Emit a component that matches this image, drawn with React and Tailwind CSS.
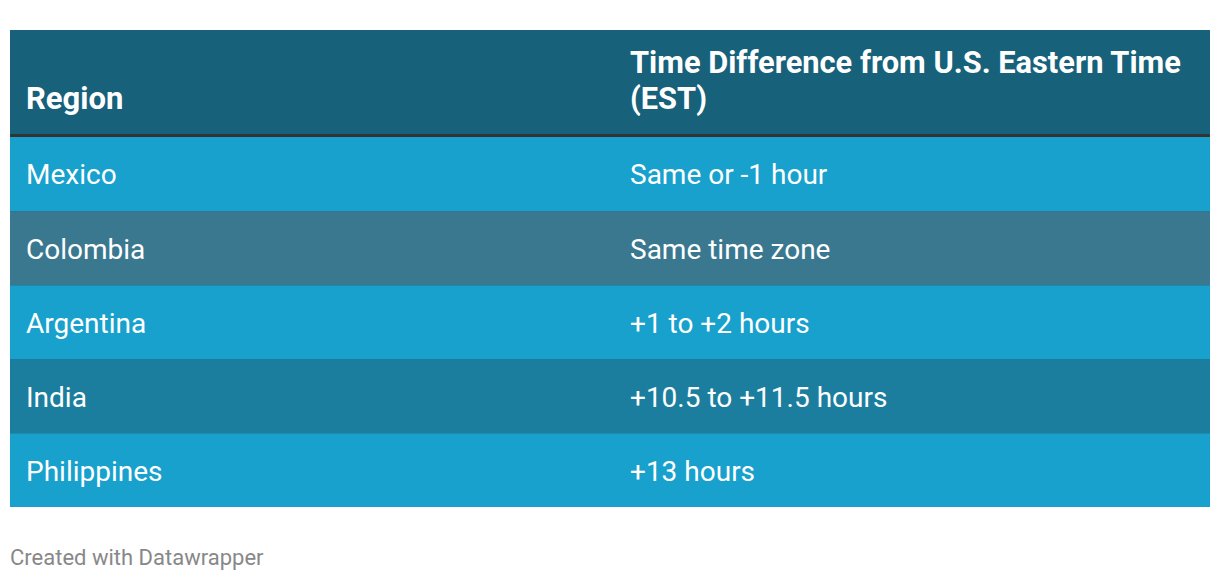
const rows = [
  { region: "Mexico", diff: "Same or -1 hour", bg: "bg-[#18a1cd]" },
  { region: "Colombia", diff: "Same time zone", bg: "bg-[#3a7890]" },
  { region: "Argentina", diff: "+1 to +2 hours", bg: "bg-[#18a1cd]" },
  { region: "India", diff: "+10.5 to +11.5 hours", bg: "bg-[#1c7e9e]" },
  { region: "Philippines", diff: "+13 hours", bg: "bg-[#18a1cd]" },
];

export default function App() {
  return (
    <div
      className="w-[1220px] h-[582px] bg-white pt-[30px] px-[10px]"
      style={{ fontFamily: "Roboto, 'Liberation Sans', sans-serif" }}
    >
      <div className="w-[1200px] text-white">
        {/* header */}
        <div className="grid grid-cols-[603px_1fr] h-[104px] bg-[#17617a] border-b-[3px] border-[#333333] box-content">
          <div className="flex items-end pl-[16px] pb-[17px] text-[31px] font-bold leading-[36px]">
            Region
          </div>
          <div className="flex items-end pl-[17px] pr-4 pb-[17px] text-[30.8px] font-bold leading-[36px]">
            Time Difference from U.S. Eastern Time (EST)
          </div>
        </div>

        {rows.map((row, i) => (
          <div
            key={row.region}
            className={`grid grid-cols-[603px_1fr] h-[74px] pt-[2px] ${row.bg} ${
              i > 0 ? "border-t border-[#1f7c9a]/60" : ""
            }`}
          >
            <div className="flex items-center pl-[16px] text-[28px] leading-none">
              {row.region}
            </div>
            <div className="flex items-center pl-[17px] text-[28px] leading-none">
              {row.diff}
            </div>
          </div>
        ))}
      </div>

      <div className="mt-[40px] text-[22px] text-[#888888] leading-none">
        Created with Datawrapper
      </div>
    </div>
  );
}
